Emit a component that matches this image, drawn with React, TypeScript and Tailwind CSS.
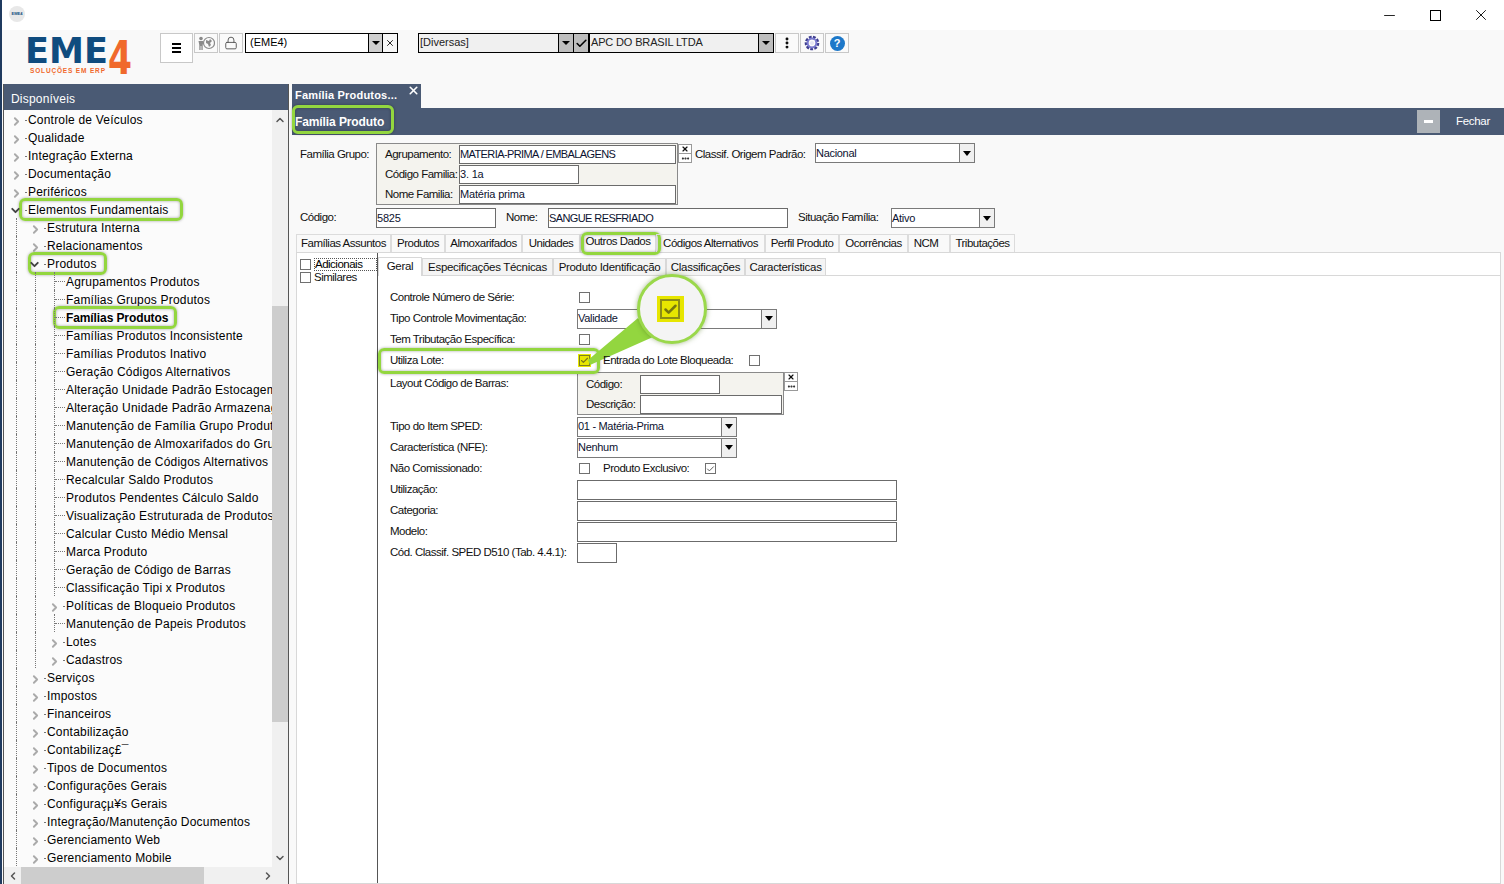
import { Check, Minus, X, ChevronRight, ChevronDown, ChevronUp, ChevronLeft, Lock, MoreVertical } from "lucide-react";

type Row = { label: string; level: number; arrow?: "right" | "down"; bold?: boolean; hl?: string };

const treeRows: Row[] = [
  { label: "Controle de Veículos", level: 0, arrow: "right" },
  { label: "Qualidade", level: 0, arrow: "right" },
  { label: "Integração Externa", level: 0, arrow: "right" },
  { label: "Documentação", level: 0, arrow: "right" },
  { label: "Periféricos", level: 0, arrow: "right" },
  { label: "Elementos Fundamentais", level: 0, arrow: "down", hl: "left-[15px] w-[164px]" },
  { label: "Estrutura Interna", level: 1, arrow: "right" },
  { label: "Relacionamentos", level: 1, arrow: "right" },
  { label: "Produtos", level: 1, arrow: "down", hl: "left-[24px] w-[79px]" },
  { label: "Agrupamentos Produtos", level: 2 },
  { label: "Famílias Grupos Produtos", level: 2 },
  { label: "Famílias Produtos", level: 2, bold: true, hl: "left-[49px] w-[124px]" },
  { label: "Famílias Produtos Inconsistente", level: 2 },
  { label: "Famílias Produtos Inativo", level: 2 },
  { label: "Geração Códigos Alternativos", level: 2 },
  { label: "Alteração Unidade Padrão Estocagem", level: 2 },
  { label: "Alteração Unidade Padrão Armazenagem", level: 2 },
  { label: "Manutenção de Família Grupo Produtos", level: 2 },
  { label: "Manutenção de Almoxarifados do Grupo", level: 2 },
  { label: "Manutenção de Códigos Alternativos", level: 2 },
  { label: "Recalcular Saldo Produtos", level: 2 },
  { label: "Produtos Pendentes Cálculo Saldo", level: 2 },
  { label: "Visualização Estruturada de Produtos", level: 2 },
  { label: "Calcular Custo Médio Mensal", level: 2 },
  { label: "Marca Produto", level: 2 },
  { label: "Geração de Código de Barras", level: 2 },
  { label: "Classificação Tipi x Produtos", level: 2 },
  { label: "Políticas de Bloqueio Produtos", level: 2, arrow: "right" },
  { label: "Manutenção de Papeis Produtos", level: 2 },
  { label: "Lotes", level: 2, arrow: "right" },
  { label: "Cadastros", level: 2, arrow: "right" },
  { label: "Serviços", level: 1, arrow: "right" },
  { label: "Impostos", level: 1, arrow: "right" },
  { label: "Financeiros", level: 1, arrow: "right" },
  { label: "Contabilização", level: 1, arrow: "right" },
  { label: "Contabilizaç£¯", level: 1, arrow: "right" },
  { label: "Tipos de Documentos", level: 1, arrow: "right" },
  { label: "Configurações Gerais", level: 1, arrow: "right" },
  { label: "Configuraçµ¥s Gerais", level: 1, arrow: "right" },
  { label: "Integração/Manutenção Documentos", level: 1, arrow: "right" },
  { label: "Gerenciamento Web", level: 1, arrow: "right" },
  { label: "Gerenciamento Mobile", level: 1, arrow: "right" },
];

const mainTabs = [
  { label: "Famílias Assuntos", w: "w-[95px]" },
  { label: "Produtos", w: "w-[54px]" },
  { label: "Almoxarifados", w: "w-[77px]" },
  { label: "Unidades", w: "w-[58px]" },
  { label: "Outros Dados", w: "w-[76px]", active: true },
  { label: "Códigos Alternativos", w: "w-[109px]" },
  { label: "Perfil Produto", w: "w-[74px]" },
  { label: "Ocorrências", w: "w-[69px]" },
  { label: "NCM", w: "w-[42px] pr-[6px]" },
  { label: "Tributações", w: "w-[65px]" },
];

const subTabs = [
  { label: "Geral", w: "w-[44px]", active: true },
  { label: "Especificações Técnicas", w: "w-[131px]" },
  { label: "Produto Identificação", w: "w-[113px]" },
  { label: "Classificações", w: "w-[79px]" },
  { label: "Características", w: "w-[81px]" },
];

function Highlight({ className }: { className: string }) {
  return (
    <span className={`absolute rounded-[6px] border-[3px] border-[#93d63f] shadow-[0_0_3px_rgba(0,0,0,0.35),inset_0_0_3px_rgba(0,0,0,0.35)] pointer-events-none ${className}`} />
  );
}

function TreeRow({ row }: { row: Row }) {
  return (
    <div className="relative flex h-[18px] items-center pl-[3px] shrink-0 whitespace-nowrap">
      {row.hl && <Highlight className={`top-[-2px] h-[23px] ${row.hl}`} />}
      {Array.from({ length: row.level }).map((_, i) => (
        <span key={i} className="ml-[9px] h-full w-[10px] shrink-0 border-l border-dotted border-[#777]" />
      ))}
      <span className="relative flex h-full w-[21px] shrink-0 items-center">
        {row.arrow === "right" && <ChevronRight size={13} strokeWidth={3.5} className="ml-[3px] mt-[4px] text-[#aaa]" />}
        {row.arrow === "down" && <ChevronDown size={13} strokeWidth={3.5} className="ml-[2px] mt-[3px] text-[#444]" />}
        {row.arrow && <span className="absolute right-[1px] top-[10px] h-px w-[2px] bg-[#777]" />}
        {!row.arrow && (
          <>
            <span className="ml-[9px] h-full border-l border-dotted border-[#777]" />
            <span className="w-[10px] border-t border-dotted border-[#777]" />
          </>
        )}
      </span>
      <span className={`relative mt-[1px] text-[12px] text-black ${row.bold ? "font-bold tracking-[-0.1px]" : "tracking-[0.2px]"}`}>{row.label}</span>
    </div>
  );
}

function Sidebar() {
  return (
    <aside className="ml-[1px] flex h-full w-[286px] shrink-0 flex-col border-x border-[#555] bg-[#fbfbfb]">
      <div className="flex h-[26px] shrink-0 items-center bg-[#4a5a74] pl-[7px] pt-[3px] text-[12px] tracking-[0.2px] text-white">Disponíveis</div>
      <div className="flex min-h-0 flex-1">
        <div className="w-[268px] shrink-0 overflow-hidden">
          {treeRows.map((r) => (
            <TreeRow key={r.label} row={r} />
          ))}
        </div>
        <div className="flex w-[16px] shrink-0 flex-col bg-[#f0f0f0]">
          <div className="flex h-[196px] items-start justify-center pt-[4px]">
            <ChevronUp size={12} strokeWidth={3} className="text-[#555]" />
          </div>
          <div className="h-[416px] bg-[#cdcdcd]" />
          <div className="flex flex-1 items-end justify-center pb-[3px]">
            <ChevronDown size={12} strokeWidth={3} className="text-[#555]" />
          </div>
        </div>
      </div>
      <div className="flex h-[17px] shrink-0 items-center bg-[#f0f0f0]">
        <span className="flex w-[17px] justify-center"><ChevronLeft size={12} strokeWidth={3} className="text-[#555]" /></span>
        <span className="h-full w-[183px] bg-[#cdcdcd]" />
        <span className="flex-1" />
        <span className="flex w-[40px] justify-center"><ChevronRight size={12} strokeWidth={3} className="text-[#555]" /></span>
      </div>
    </aside>
  );
}

function Label({ children, wide, className = "" }: { children: React.ReactNode; wide?: boolean; className?: string }) {
  return <span className={`relative whitespace-nowrap text-[11.5px] text-[#111] ${wide ? "tracking-[-0.3px]" : "tracking-[-0.5px]"} ${className}`}>{children}</span>;
}

function Input({ value = "", caps, short, className = "" }: { value?: string; caps?: boolean; short?: boolean; className?: string }) {
  return (
    <div className={`flex shrink-0 items-center border border-[#6b6b6b] bg-white text-[11px] text-[#0c1230] whitespace-nowrap ${short ? "h-[19px]" : "h-[20px]"} ${caps ? "tracking-[-0.6px]" : "tracking-[-0.2px]"} ${className}`}>
      {value}
    </div>
  );
}

function Select({ value, className = "" }: { value: string; className?: string }) {
  return (
    <div className={`flex h-[20px] shrink-0 items-center border border-[#7a7a7a] bg-white text-[11px] tracking-[-0.3px] text-[#0c1230] ${className}`}>
      <span className="flex-1">{value}</span>
      <span className="flex h-full w-[15px] items-center justify-center border-l border-[#7a7a7a] bg-[#f0f0f0]">
        <span className="h-0 w-0 border-x-[4px] border-t-[5px] border-x-transparent border-t-black" />
      </span>
    </div>
  );
}

function Box({ checked, className = "" }: { checked?: boolean; className?: string }) {
  return (
    <span className={`flex h-[11px] w-[11px] shrink-0 items-center justify-center border border-[#707070] bg-white ${className}`}>
      {checked && <Check size={10} strokeWidth={2.5} className="text-[#555]" />}
    </span>
  );
}

function LookupButtons({ className = "" }: { className?: string }) {
  return (
    <div className={`flex h-[19px] w-[14px] shrink-0 flex-col border border-[#999] bg-white text-[#111] ${className}`}>
      <span className="flex h-[9px] items-center justify-center border-b border-[#999]"><X size={8} strokeWidth={3.5} /></span>
      <span className="flex flex-1 items-center justify-center"><MoreVertical size={9} strokeWidth={3.5} className="rotate-90" /></span>
    </div>
  );
}

function FormRow({ label, children }: { label: string; children?: React.ReactNode }) {
  return (
    <div className="flex h-[21px] items-center">
      <Label className="mt-[1px] w-[187px] shrink-0">{label}</Label>
      {children}
    </div>
  );
}

function ToolButton({ children, className = "" }: { children: React.ReactNode; className?: string }) {
  return (
    <div className={`flex h-[20px] w-[24px] shrink-0 items-center justify-center border border-[#c8c8c8] bg-[#fafafa] ${className}`}>
      {children}
    </div>
  );
}

function Toolbar() {
  return (
    <div className="flex h-[54px] shrink-0 items-start bg-[#f9f9f9] pl-[23px]">
      <svg width="108" height="56" viewBox="0 0 108 56" className="shrink-0">
        <text x="0" y="33" fontFamily="DejaVu Sans" fontWeight="700" fontSize="35" fill="#0f4c7f" textLength="83" lengthAdjust="spacingAndGlyphs">EME</text>
        <text x="83" y="44" fontFamily="DejaVu Sans" fontWeight="700" fontSize="46" fill="#f0692c" textLength="24" lengthAdjust="spacingAndGlyphs">4</text>
        <text x="5" y="43" fontFamily="Liberation Sans" fontWeight="700" fontSize="6.5" fill="#f0692c" textLength="75" lengthAdjust="spacing">SOLUÇÕES EM ERP</text>
      </svg>
      <div className="ml-[27px] mt-[3px] flex h-[30px] w-[33px] shrink-0 items-center justify-center border border-[#c8c8c8] bg-white">
        <span className="flex w-[9px] flex-col gap-[2px]">
          <span className="h-[2px] bg-black" />
          <span className="h-[2px] bg-black" />
          <span className="h-[2px] bg-black" />
        </span>
      </div>
      <div className="ml-[1px] mt-[3px] flex items-center">
        <ToolButton>
          <svg width="18" height="14" viewBox="0 0 18 14" fill="#8a8a8a">
            <circle cx="4" cy="2.5" r="1.8" />
            <path d="M1.5 5h5l-.8 4v5H4.4v-4h-.8v4H2.3V9z" />
            <circle cx="12" cy="7" r="5.5" fill="none" stroke="#8a8a8a" strokeWidth="1.2" />
            <path d="M9 4l3 1 1-2 2 2-2 2 1 2-2 2-1-3-2-1z" />
          </svg>
        </ToolButton>
        <ToolButton className="ml-[1px]">
          <Lock size={14} strokeWidth={1.6} className="text-[#555]" />
        </ToolButton>
        <div className="ml-[2px] flex h-[20px] w-[153px] items-center border border-black bg-white text-[11px] text-black">
          <span className="flex-1 pb-[2px] pl-[4px]">(EME4)</span>
          <span className="flex h-full w-[14px] items-center justify-center border-l border-black bg-[#cfcfcf]">
            <span className="h-0 w-0 border-x-[4px] border-t-[4px] border-x-transparent border-t-black" />
          </span>
          <span className="flex h-full w-[15px] items-center justify-center border-l border-black bg-[#f7f7f7]">
            <X size={10} strokeWidth={2} />
          </span>
        </div>
        <div className="ml-[20px] flex h-[20px] w-[171px] items-center border border-black bg-[#f0f0f0] text-[11px] text-[#222]">
          <span className="flex-1 pb-[2px] pl-[1px]">[Diversas]</span>
          <span className="flex h-full w-[15px] items-center justify-center border-l border-black bg-[#bdbdbd]">
            <span className="h-0 w-0 border-x-[4px] border-t-[4px] border-x-transparent border-t-black" />
          </span>
          <span className="flex h-full w-[15px] items-center justify-center border-l border-black bg-[#bdbdbd]">
            <Check size={13} strokeWidth={3} className="text-black" />
          </span>
        </div>
        <div className="flex h-[20px] w-[185px] items-center border border-black bg-[#f0f0f0] text-[11px] tracking-[-0.15px] text-[#222]">
          <span className="flex-1 pb-[2px] pl-[1px]">APC DO BRASIL LTDA</span>
          <span className="flex h-full w-[15px] items-center justify-center border-l border-black bg-[#bdbdbd]">
            <span className="h-0 w-0 border-x-[4px] border-t-[4px] border-x-transparent border-t-black" />
          </span>
        </div>
        <ToolButton className="ml-[1px]">
          <MoreVertical size={14} strokeWidth={3} className="text-black" />
        </ToolButton>
        <ToolButton className="ml-[1px]">
          <svg width="16" height="16" viewBox="0 0 16 16">
            <circle cx="8" cy="8" r="5.6" fill="none" stroke="#3f3f8f" strokeWidth="3.4" strokeDasharray="2.6 1.2" />
            <circle cx="8" cy="8" r="4.4" fill="none" stroke="#7a7ad0" strokeWidth="2" />
            <circle cx="8" cy="8" r="2" fill="#e6e6f5" />
          </svg>
        </ToolButton>
        <ToolButton className="ml-[1px]">
          <span className="flex h-[15px] w-[15px] items-center justify-center rounded-full bg-[#1d78c9] text-[11px] font-bold leading-none text-white">?</span>
        </ToolButton>
      </div>
    </div>
  );
}

function Magnifier() {
  return (
    <div className="pointer-events-none absolute left-[-12px] top-[-88px] h-[110px] w-[145px]">
      <svg width="145" height="110" viewBox="0 0 145 110" className="absolute left-0 top-0">
        <polygon points="72,52 87,71 24,99 22,94" fill="#93d63f" />
      </svg>
      <div className="absolute left-[71px] top-[8px] flex h-[70px] w-[70px] items-center justify-center rounded-full border-[3px] border-[#9ad84a] bg-[#f4f4f4] shadow-[0_0_5px_rgba(80,120,30,0.5)]">
        <span className="mr-[4px] flex h-[26px] w-[27px] items-center justify-center bg-[#e7e600]">
          <span className="flex h-[20px] w-[20px] items-center justify-center border-[2px] border-[#8c8c16]">
            <Check size={15} strokeWidth={4} className="text-[#777710]" />
          </span>
        </span>
      </div>
    </div>
  );
}

function GeneralForm() {
  return (
    <div className="flex flex-col pl-[12px] pt-[11px]">
      <FormRow label="Controle Número de Série:"><Box className="ml-[2px]" /></FormRow>
      <FormRow label="Tipo Controle Movimentação:"><Select value="Validade" className="w-[200px]" /></FormRow>
      <FormRow label="Tem Tributação Específica:"><Box className="ml-[2px]" /></FormRow>
      <div className="relative flex h-[21px] items-center">
        <Highlight className="left-[-12px] top-[-2px] h-[26px] w-[222px]" />
        <Label className="mt-[1px] w-[187px] shrink-0">Utiliza Lote:</Label>
        <span className="relative ml-[1px] flex h-[13px] w-[13px] shrink-0 items-center justify-center bg-[#e7e600]">
          <span className="flex h-[11px] w-[11px] items-center justify-center border border-[#7f7f20]">
            <Check size={9} strokeWidth={3} className="text-[#77771c]" />
          </span>
          <Magnifier />
        </span>
        <Label className="ml-[12px] mt-[1px] w-[146px] shrink-0">Entrada do Lote Bloqueada:</Label>
        <Box />
      </div>
      <div className="flex h-[45px] items-start">
        <Label className="mt-[4px] w-[187px] shrink-0">Layout Código de Barras:</Label>
        <div className="mt-[1px] flex h-[43px] w-[207px] shrink-0 flex-col border border-[#8a8a8a] bg-[#f4f3ee]">
          <div className="mt-[2px] flex h-[19px] items-center">
            <Label className="ml-[8px] w-[54px]">Código:</Label>
            <Input short className="w-[80px]" />
          </div>
          <div className="mt-[1px] flex h-[19px] items-center">
            <Label className="ml-[8px] w-[54px]">Descrição:</Label>
            <Input short className="w-[142px]" />
          </div>
        </div>
        <LookupButtons className="mt-[1px]" />
      </div>
      <FormRow label="Tipo do Item SPED:"><Select value="01 - Matéria-Prima" className="w-[160px]" /></FormRow>
      <FormRow label="Característica (NFE):"><Select value="Nenhum" className="w-[160px]" /></FormRow>
      <FormRow label="Não Comissionado:">
        <Box className="ml-[2px]" />
        <Label className="ml-[13px] w-[102px] shrink-0">Produto Exclusivo:</Label>
        <Box checked />
      </FormRow>
      <FormRow label="Utilização:"><Input className="w-[320px]" /></FormRow>
      <FormRow label="Categoria:"><Input className="w-[320px]" /></FormRow>
      <FormRow label="Modelo:"><Input className="w-[320px]" /></FormRow>
      <FormRow label="Cód. Classif. SPED D510 (Tab. 4.4.1):"><Input className="w-[40px]" /></FormRow>
    </div>
  );
}

function Content() {
  return (
    <main className="flex min-w-0 flex-1 flex-col">
      <div className="ml-[3px] flex h-[24px] w-[129px] shrink-0 items-end justify-between bg-[#4a5a74] text-white">
        <span className="pb-[7px] pl-[3px] text-[11px] font-bold leading-none tracking-[0.2px]">Família Produtos...</span>
        <X size={13} strokeWidth={3} className="mb-[11px] mr-[1px]" />
      </div>
      <div className="relative ml-[3px] flex h-[27px] shrink-0 items-center justify-between bg-[#4a5a74] text-white">
        <Highlight className="left-0 top-[-3px] h-[29px] w-[102px]" />
        <span className="pl-[3px] text-[12px] font-bold tracking-[-0.1px]">Família Produto</span>
        <div className="flex h-full items-center">
          <span className="flex h-[23px] w-[23px] items-center justify-center bg-[#aeb3b8]">
            <span className="h-[3px] w-[9px] bg-white" />
          </span>
          <span className="w-[64px] pl-[16px] text-[11.5px] tracking-[-0.3px]">Fechar</span>
        </div>
      </div>

      <div className="flex min-h-0 flex-1 flex-col pl-[7px] pt-[9px]">
        <div className="flex h-[61px] shrink-0 items-start">
          <Label className="mt-[2px] w-[80px] shrink-0 pl-[4px]">Família Grupo:</Label>
          <div className="-mt-[1px] flex h-[62px] w-[302px] shrink-0 flex-col border border-[#8a8a8a] bg-[#f4f3ee] pt-[1px]">
            <div className="flex h-[19px] items-center">
              <Label className="ml-[8px] mt-[1px] w-[74px]">Agrupamento:</Label>
              <Input value="MATERIA-PRIMA / EMBALAGENS" caps short className="w-[217px]" />
            </div>
            <div className="mt-[1px] flex h-[19px] items-center">
              <Label className="ml-[8px] mt-[1px] w-[74px]">Código Familia:</Label>
              <Input value="3. 1a" short className="w-[120px]" />
            </div>
            <div className="mt-[1px] flex h-[19px] items-center">
              <Label className="ml-[8px] mt-[1px] w-[74px]">Nome Familia:</Label>
              <Input value="Matéria prima" short className="w-[217px]" />
            </div>
          </div>
          <LookupButtons />
          <Label className="ml-[3px] mt-[2px] w-[120px] shrink-0">Classif. Origem Padrão:</Label>
          <Select value="Nacional" className="-mt-[1px] w-[160px]" />
        </div>

        <div className="mt-[3px] flex h-[20px] shrink-0 items-center">
          <Label className="w-[80px] shrink-0 pl-[4px]">Código:</Label>
          <Input value="5825" className="w-[120px]" />
          <Label className="ml-[10px] w-[42px] shrink-0">Nome:</Label>
          <Input value="SANGUE RESFRIADO" caps className="w-[240px]" />
          <Label className="ml-[10px] w-[93px] shrink-0">Situação Família:</Label>
          <Select value="Ativo" className="w-[104px]" />
        </div>

        <div className="mt-[6px] flex h-[18px] shrink-0">
          {mainTabs.map((t) => (
            <div key={t.label} className={`relative flex items-center justify-center border border-b-0 border-[#dcdcdc] ${t.w}`}>
              {t.active && <Highlight className="left-0 top-[-3px] h-[23px] w-[80px]" />}
              <Label className={t.active ? "-mt-[3px]" : ""}>{t.label}</Label>
            </div>
          ))}
        </div>

        <div className="mr-[3px] flex min-h-0 flex-1 border border-[#d8d8d8] bg-white">
          <div className="h-full w-[81px] shrink-0 border-r border-[#555] pl-[3px] pt-[5px]">
            <div className="flex h-[13px] items-center gap-[3px]">
              <Box className="border-[#999]" />
              <span className="w-[63px] whitespace-nowrap border border-dotted border-[#555] text-[11.5px] leading-[11px] tracking-[-0.5px]">Adicionais</span>
            </div>
            <div className="flex h-[13px] items-center gap-[3px]">
              <Box className="border-[#999]" />
              <Label>Similares</Label>
            </div>
          </div>
          <div className="flex min-w-0 flex-1 flex-col">
            <div className="mt-[5px] flex h-[18px] shrink-0 border-b border-[#d8d8d8]">
              {subTabs.map((t) => (
                <div
                  key={t.label}
                  className={`flex items-center justify-center border border-b-0 border-[#d8d8d8] ${t.w} ${t.active ? "-mt-[1px] h-[19px] bg-white pb-[1px]" : "bg-[#f4f4f4] pt-[2px]"}`}
                >
                  <Label wide>{t.label}</Label>
                </div>
              ))}
            </div>
            <GeneralForm />
          </div>
        </div>
      </div>
    </main>
  );
}

export default function App() {
  return (
    <div className="flex h-[884px] w-[1504px] flex-col overflow-hidden border-l-2 border-[#1f3a5f] bg-[#f9f9f9] font-['Liberation_Sans',Arial,sans-serif]">
      <div className="flex h-[30px] shrink-0 items-center justify-between bg-white">
        <span className="ml-[7px] mt-[-2px] flex h-[16px] w-[16px] items-center justify-center rounded-full bg-[#e8e8e8] text-[4px] font-bold text-[#0f4c7f]">EME4</span>
        <div className="flex items-center text-black">
          <span className="flex w-[46px] justify-center"><Minus size={17} strokeWidth={1.2} /></span>
          <span className="flex w-[46px] justify-center"><span className="h-[11px] w-[11px] border border-black" /></span>
          <span className="flex w-[46px] justify-center"><X size={18} strokeWidth={1.2} /></span>
        </div>
      </div>
      <Toolbar />
      <div className="flex min-h-0 flex-1">
        <Sidebar />
        <Content />
      </div>
    </div>
  );
}
